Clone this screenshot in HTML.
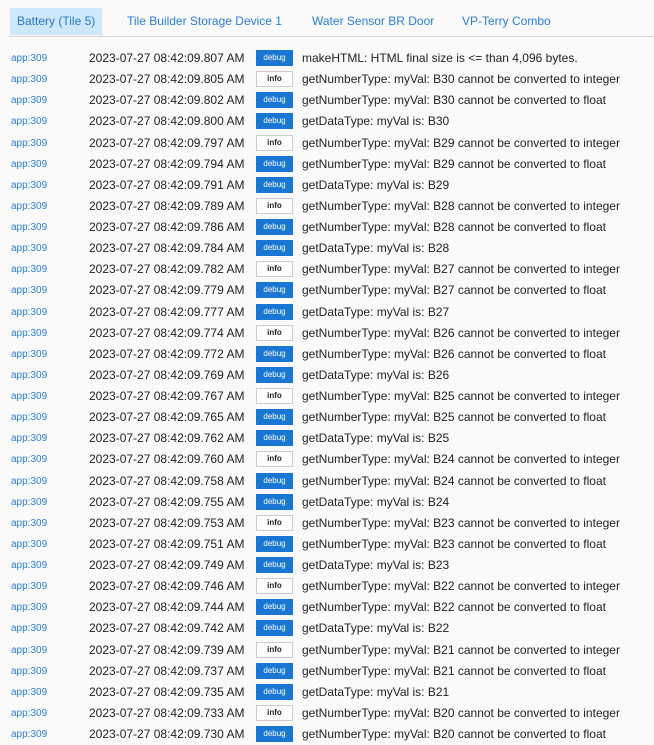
<!DOCTYPE html>
<html><head><meta charset="utf-8"><style>
body{margin:0;width:654px;height:743px;background:#fafafa;font-family:"Liberation Sans",Arial,sans-serif;overflow:hidden;position:relative}
.tabs{position:absolute;left:10px;top:0;right:0;height:36px;border-bottom:1px solid #d6d6d6}
.tab{position:absolute;top:8px;height:27px;line-height:27px;font-size:12px;color:#2a7fd4;padding:0 7px}
.tab.act{background:#cfe7fb;color:#2277c9}
.row{position:absolute;left:0;width:654px;height:21px;line-height:21px;white-space:nowrap}
.app{position:absolute;left:11px;font-size:10px;color:#2a7fd4}
.ts{position:absolute;left:89px;font-size:12px;color:#222}
.b{position:absolute;left:256px;top:2px;width:37px;height:16px;line-height:16px;text-align:center;font-size:8px;box-sizing:border-box}
.d{background:#1976d2;color:#fff}
.i{background:#fff;border:1px solid #ccc;color:#222;line-height:14px;font-weight:bold}
.m{position:absolute;left:302px;font-size:12px;color:#222}
</style></head><body>
<div class="tabs">
<div class="tab act" style="left:0">Battery (Tile 5)</div>
<div class="tab" style="left:110px">Tile Builder Storage Device 1</div>
<div class="tab" style="left:295px">Water Sensor BR Door</div>
<div class="tab" style="left:445px">VP-Terry Combo</div>
</div>
<div id="rows"></div>
<script>
var r=[["807","d","makeHTML: HTML final size is &lt;= than 4,096 bytes."]];
var ms=[805,802,800,797,794,791,789,786,784,782,779,777,774,772,769,767,765,762,760,758,755,753,751,749,746,744,742,739,737,735,733,730];
var k=0;
for(var n=30;n>=20;n--){
 r.push([ms[k++],"i","getNumberType: myVal: B"+n+" cannot be converted to integer"]);
 if(k>=ms.length)break;
 r.push([ms[k++],"d","getNumberType: myVal: B"+n+" cannot be converted to float"]);
 if(k>=ms.length)break;
 r.push([ms[k++],"d","getDataType: myVal is: B"+n]);
 if(k>=ms.length)break;
}
var h="";
for(var j=0;j<r.length;j++){
 var y=(48+j*21.125).toFixed(2);
 h+='<div class="row" style="top:'+y+'px"><span class="app">app:309</span><span class="ts">2023-07-27 08:42:09.'+r[j][0]+' AM</span><span class="b '+r[j][1]+'">'+(r[j][1]=="d"?"debug":"info")+'</span><span class="m">'+r[j][2]+'</span></div>';
}
document.getElementById("rows").innerHTML=h;
</script>
</body></html>
